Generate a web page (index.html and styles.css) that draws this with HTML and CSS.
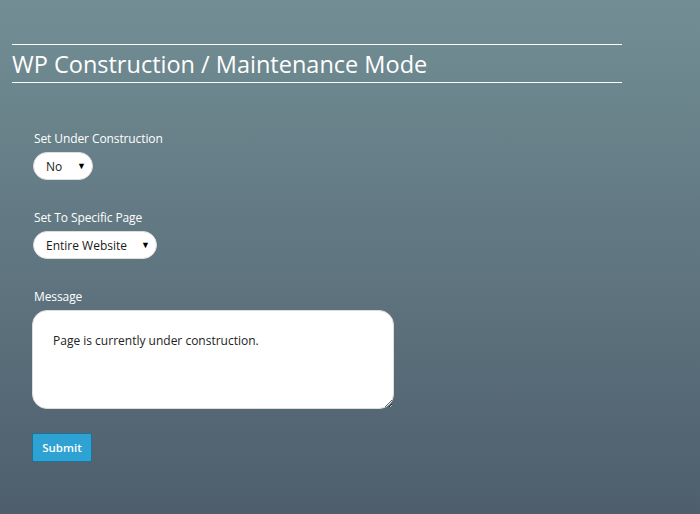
FILE: index.html
```html
<!DOCTYPE html>
<html>
<head>
<meta charset="utf-8">
<link rel="stylesheet" href="styles.css">
</head>
<body>
<div class="page">
  <h1 class="title">WP Construction / Maintenance Mode</h1>
  <form class="form">
    <div class="field">
      <label class="label">Set Under Construction</label>
      <span class="select-wrap select-no">
        <select class="select"><option>No</option><option>Yes</option></select>
      </span>
    </div>
    <div class="field">
      <label class="label">Set To Specific Page</label>
      <span class="select-wrap select-page">
        <select class="select"><option>Entire Website</option></select>
      </span>
    </div>
    <div class="field">
      <label class="label">Message</label>
      <textarea class="message">Page is currently under construction.</textarea>
    </div>
    <button type="button" class="submit">Submit</button>
  </form>
</div>
</body>
</html>
```

FILE: styles.css
```css
html, body {
  margin: 0;
  height: 100%;
}
body {
  background: linear-gradient(to bottom, #728e94 0%, #4e5e6d 100%);
  font-family: "Open Sans", "Noto Sans", sans-serif;
  color: #fff;
  min-height: 514px;
}
.page {
  padding-top: 44px;
}
.title {
  margin: 0 0 0 12px;
  width: 610px;
  border-top: 1px solid #fff;
  border-bottom: 1px solid #fff;
  font-weight: normal;
  font-size: 23.5px;
  line-height: 38px;
  height: 37px;
  box-sizing: content-box;
  letter-spacing: 0;
}
.form {
  padding: 48px 0 0 33px;
  display: flex;
  flex-direction: column;
  align-items: flex-start;
}
.field {
  display: flex;
  flex-direction: column;
  align-items: flex-start;
  margin-bottom: 30px;
}
.label {
  font-size: 12px;
  line-height: 16px;
  margin-bottom: 5px;
  margin-left: 1px;
  letter-spacing: -0.1px;
}
.select-wrap {
  position: relative;
  display: inline-block;
}
.select-wrap::after {
  content: "▼";
  position: absolute;
  right: 7px;
  top: 7px;
  font-size: 9px;
  color: #000;
  pointer-events: none;
}
.select {
  appearance: none;
  -webkit-appearance: none;
  border: 1px solid #ddd;
  background: #fff;
  border-radius: 14px;
  height: 28px;
  padding: 0 0 0 12px;
  font-family: "Open Sans", "Noto Sans", sans-serif;
  font-size: 12px;
  color: #1a1a1a;
}
.select-no .select { width: 60px; }
.select-page .select { width: 124px; }
.message {
  width: 362px;
  height: 99px;
  box-sizing: border-box;
  border: 1px solid #ddd;
  border-radius: 15px;
  background: #fff;
  padding: 21px 20px;
  font-family: "Open Sans", "Noto Sans", sans-serif;
  font-size: 12px;
  color: #222;
  margin-left: -1px;
}
.submit {
  margin-top: -6px;
  margin-left: -1px;
  width: 60px;
  height: 29px;
  background: #2ea2d3;
  border: 1px solid #1d7399;
  border-radius: 2px;
  color: #fff;
  font-family: "Open Sans", "Noto Sans", sans-serif;
  font-size: 11.5px;
  font-weight: 600;
  padding: 0;
}
```
